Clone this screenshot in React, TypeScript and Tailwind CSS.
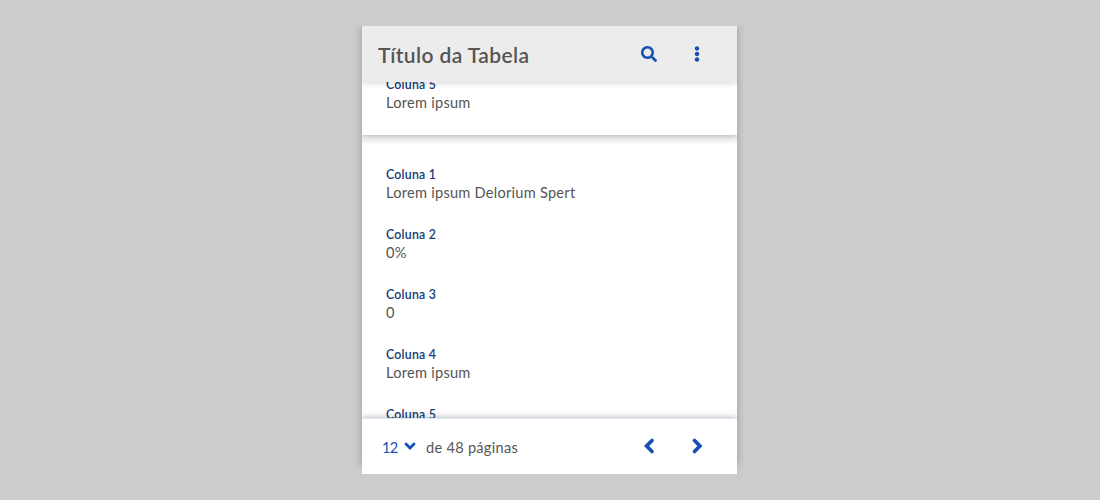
import { FaEllipsisV, FaSearch } from 'react-icons/fa';

type Cell = { label: string; value: string };

const cells: Cell[] = [
  { label: 'Coluna 1', value: 'Lorem ipsum Delorium Spert' },
  { label: 'Coluna 2', value: '0%' },
  { label: 'Coluna 3', value: '0' },
  { label: 'Coluna 4', value: 'Lorem ipsum' },
  { label: 'Coluna 5', value: 'Lorem ipsum' },
];

function Field({ label, value }: Cell) {
  return (
    <div className="h-[60px] shrink-0">
      <div className="h-[18px] whitespace-nowrap text-[12.3px] leading-[18px] font-semibold tracking-[0.25px] text-[#153a75]">{label}</div>
      <div className="h-[18px] whitespace-nowrap text-[14.6px] leading-[18px] tracking-[0.25px] text-[#555]">{value}</div>
    </div>
  );
}

function Chevron({ points }: { points: string }) {
  return (
    <svg width="16" height="18" viewBox="0 0 16 18" fill="none" stroke="currentColor" strokeWidth="3.7" strokeLinecap="round" strokeLinejoin="miter">
      <polyline points={points} />
    </svg>
  );
}

export default function App() {
  return (
    <div className="h-[500px] w-[1100px] overflow-hidden bg-[#ccc] pt-[26px] pl-[362px] font-['Lato',sans-serif]">
      <div className="-ml-3 h-[448px] overflow-hidden pl-3">
        <main className="flex h-[440px] w-[375px] flex-col shadow-[0_0_8px_rgba(0,0,0,0.25)]">
          <header className="relative z-10 flex h-14 shrink-0 items-center bg-[#ececec] pl-4 pr-5 shadow-[0_1px_6px_rgba(0,0,0,0.16)] [clip-path:inset(0_0_-10px_0)]">
            <h1 className="mt-0.5 flex-1 whitespace-nowrap text-[21px] leading-7 font-semibold tracking-[0.4px] text-[#555]">Título da Tabela</h1>
            <button aria-label="Buscar" className="flex h-10 w-10 items-center justify-center text-[#1351b4]"><FaSearch size={16} /></button>
            <button aria-label="Mais opções" className="ml-2 flex h-10 w-10 items-center justify-center text-[#1351b4]"><FaEllipsisV size={16} /></button>
          </header>
          <section className="flex h-[336px] shrink-0 flex-col overflow-hidden bg-[#f4f4f4]">
            <div className="flex h-[53px] shrink-0 flex-col justify-end bg-white px-6 shadow-[0_1px_6px_rgba(0,0,0,0.28)]">
              <div className="-mb-px"><Field label="Coluna 5" value="Lorem ipsum" /></div>
            </div>
            <div className="relative mt-2 flex-1 overflow-hidden bg-white px-6 pt-[23px]">
              {cells.map((cell) => <Field key={cell.label} {...cell} />)}
            </div>
          </section>
          <footer className="relative z-10 flex h-14 shrink-0 items-center border-t border-[#dbe8fb] bg-white pl-5 pr-5 text-[14.6px] text-[#555] shadow-[0_-1px_6px_rgba(0,0,0,0.25)] [clip-path:inset(-10px_0_0_0)]">
            <button className="flex items-center text-[#1351b4]">
              <span className="w-[20px] pt-0.5 text-left tracking-[-0.6px]">12</span>
              <svg className="-mt-px ml-0.5" width="12" height="10" viewBox="0 0 12 10" fill="none" stroke="currentColor" strokeWidth="2.8" strokeLinecap="round"><polyline points="2,3 6,7 10,3" /></svg>
            </button>
            <span className="ml-[10px] flex-1 whitespace-nowrap pt-0.5 tracking-[0.27px]">de 48 páginas</span>
            <button aria-label="Página anterior" className="mb-px flex h-10 w-10 items-center justify-center text-[#1351b4]"><Chevron points="11,3.5 5.6,9 11,14.5" /></button>
            <button aria-label="Próxima página" className="mb-px ml-2 flex h-10 w-10 items-center justify-center text-[#1351b4]"><Chevron points="5.5,3.5 10.9,9 5.5,14.5" /></button>
          </footer>
        </main>
      </div>
    </div>
  );
}
